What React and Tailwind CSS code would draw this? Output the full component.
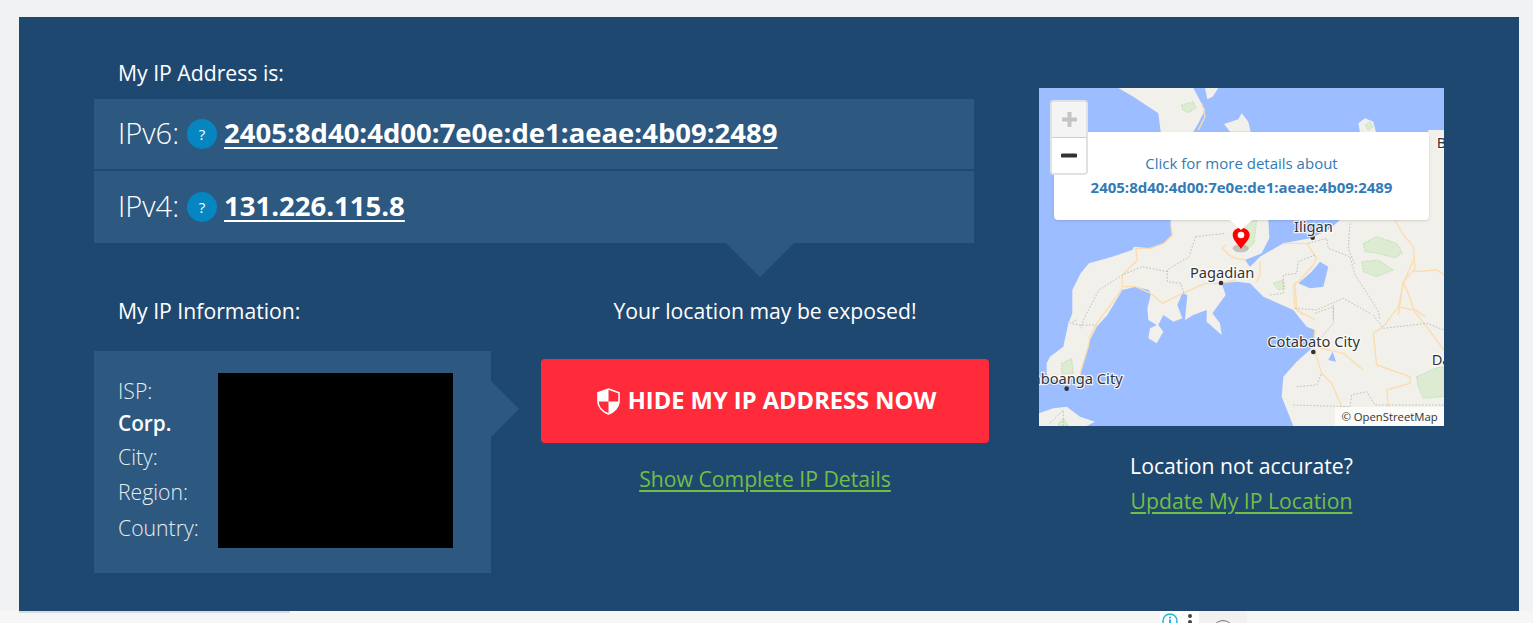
const path = (dx, dy, pts, close) =>
  "M" + pts.map(([x, y]) => `${x + dx},${y + dy}`).join(" L") + (close ? " Z" : "");
const c0 = (pts, close) => path(0, 510, pts, close); // lower half of the map
const c2 = (pts, close) => path(27, 405, pts, close); // middle left
const c3 = (pts, close) => path(630, 405, pts, close); // middle right

const LAND = "M1242,150 L1197,150 L1100,250 L1000,380 L930,420 L895,450 L840,475 L760,490 L690,530 L660,560 L645,540 L695,520 L718,475 L715,420 L715,300 L500,200 L490,155 L505,130 L525,90 L490,24 L265,24 L310,50 L385,100 L392,155 L420,300 L422,430 L427,465 L402,490 L357,505 L312,500 L307,510 L247,530 L177,550 L152,580 L127,630 L127,700 L115,730 L100,800 L60,830 L50,850 L50,880 L60,900 L110,900 L150,890 L165,830 L180,780 L200,740 L232,705 L277,630 L317,620 L357,630 L362,645 L352,685 L355,720 L380,735 L360,745 L355,775 L380,790 L400,755 L385,735 L400,705 L430,725 L457,715 L442,675 L457,640 L472,645 L465,720 L490,705 L530,690 L530,725 L575,765 L570,730 L547,700 L587,645 L575,610 L620,605 L660,610 L700,650 L790,690 L830,740 L855,750 L850,800 L800,845 L760,890 L755,950 L790,1038 L1242,1038 Z";
const ROADS = [
  "M515,70 L525,110 L505,150",
  c2([[395, 30], [400, 60], [375, 85], [335, 100], [290, 100], [295, 135], [250, 180], [250, 215], [290, 215], [335, 235], [370, 265], [430, 235], [500, 205], [545, 205], [590, 195]]),
  c2([[560, 90], [550, 100], [570, 120], [590, 130], [620, 135]]),
  "M150,880 L175,800 L180,770 L200,730 L245,670 L277,625",
  c3([[465, 15], [490, 60], [520, 95], [525, 160], [490, 200], [475, 300]]),
  c3([[490, 200], [510, 250], [520, 280], [555, 305]]),
  c3([[520, 170], [590, 165], [615, 180]]),
  c3([[60, 140], [60, 180], [50, 200]]),
  c3([[130, 85], [200, 85], [230, 130], [220, 150], [180, 195], [160, 210], [165, 280], [190, 300]]),
  c0([[855, 240], [850, 290], [875, 370], [905, 400], [935, 470]]),
  c0([[855, 290], [940, 310], [1000, 360]]),
  c0([[1030, 250], [1040, 345], [1140, 380], [1140, 400], [1070, 420], [1075, 470]]),
  c0([[1150, 30], [1120, 100], [1105, 170], [1150, 180], [1190, 230], [1242, 300]]),
  c0([[1105, 170], [1060, 230], [1030, 250]]),
  c0([[795, 100], [800, 180], [855, 210]]),
];
const BORDERS = [
  c2([[470, 65], [560, 55]]),
  c2([[470, 65], [450, 125], [385, 165], [385, 200], [425, 205], [435, 235]]),
  c2([[385, 170], [310, 155], [250, 180], [180, 225], [135, 310], [125, 340]]),
  "M140,720 L120,730 L150,735 L200,735",
  c3([[205, 85], [260, 70], [265, 100], [330, 125], [345, 180], [385, 240], [415, 290], [420, 315]]),
  c3([[225, 120], [175, 140], [170, 175], [130, 180], [130, 235], [90, 240]]),
  c3([[165, 280], [230, 285], [310, 250], [390, 295]]),
  c3([[280, 270], [280, 315]]),
  c3([[330, 25], [325, 100], [345, 150]]),
  c0([[800, 410], [860, 405], [875, 370]]),
  c0([[790, 465], [960, 470], [965, 435], [1010, 425], [1035, 465], [1242, 465]]),
  c0([[1030, 195], [1060, 235], [1190, 220], [1242, 240]]),
  c0([[855, 190], [910, 170], [910, 220], [850, 290]]),
  c0([[60, 520], [100, 480], [100, 528]]),
];
const GREENS = [
  "M455,75 L490,65 L498,85 L475,98 L458,90 Z",
  "M1005,135 L1020,125 L1030,140 L1015,150 Z",
  c3([[370, 85], [410, 65], [470, 85], [488, 115], [465, 128], [410, 115], [375, 110]], true),
  c3([[365, 140], [415, 135], [460, 165], [410, 185], [370, 170]], true),
  c3([[100, 205], [130, 195], [135, 220], [115, 225]], true),
  c0([[1160, 380], [1215, 355], [1242, 350], [1242, 440], [1180, 445], [1165, 410]], true),
  c0([[95, 340], [125, 325], [130, 370], [95, 372]], true),
  "M645,430 L680,420 L672,490 L650,510 L640,500 Z",
  c0([[85, 520], [100, 505], [115, 528], [85, 528]], true),
];
const LABELS = [
  ["Iligan", 792, 455, "start"],
  ["Pagadian", 480, 595, "start"],
  ["Cotabato City", 712, 802, "start"],
  ["Zamboanga City", 278, 912, "end"],
  ["B", 1220, 205, "start"],
  ["Da", 1205, 855, "start"],
];
const DOTS = [[848, 473], [573, 609], [850, 816], [110, 926]];

function MapArt() {
  return (
    <svg viewBox="27 24 1215 1014" width="405" height="338" className="block">
      <rect x="27" y="24" width="1215" height="1014" fill="#9cbdff" />
      <path d={LAND} fill="#f2f0eb" />
      <path d="M27,1000 L70,985 L110,980 L150,1010 L195,1025 L170,1038 L27,1038 Z" fill="#f2f0eb" />
      <path d="M525,24 L565,24 L548,50 L532,58 Z" fill="#f2f0eb" />
      <path d="M582,132 L625,118 L635,100 L655,125 L662,155 L600,155 Z" fill="#f2f0eb" />
      <path d="M985,130 L1005,115 L1030,125 L1038,157 L990,157 Z" fill="#f2f0eb" />
      {GREENS.map((d) => (
        <path key={d} d={d} fill="#dcebd2" stroke="#b4e0ac" strokeWidth="3" strokeDasharray="4 4" strokeLinejoin="round" />
      ))}
      <path d={c3([[240, 140], [265, 155], [250, 215], [210, 220], [175, 205], [215, 170]], true)} fill="#9cbdff" />
      <path d="M895,840 L908,815 L918,845 Z" fill="#9cbdff" />
      {ROADS.map((d) => (
        <path key={d} d={d} fill="none" stroke="#fbdcae" strokeWidth="4" strokeLinejoin="round" />
      ))}
      {BORDERS.map((d) => (
        <path key={d} d={d} fill="none" stroke="#c2c0bb" strokeWidth="3" strokeDasharray="5 5" />
      ))}
      {DOTS.map(([x, y]) => (
        <circle key={x} cx={x} cy={y} r="7" fill="#333" />
      ))}
      {LABELS.map(([t, x, y, a]) => (
        <text
          key={t}
          x={x}
          y={y}
          textAnchor={a}
          fontSize="44"
          fill="#333"
          stroke="#ffffff"
          strokeWidth="7"
          strokeOpacity="0.85"
          paintOrder="stroke"
          style={{ fontFamily: '"Noto Sans", sans-serif' }}
        >
          {t}
        </text>
      ))}
      <ellipse cx="632" cy="505" rx="24" ry="12" fill="#8a8f80" opacity="0.45" />
      <path d="M633,507 C620,488 608,478 608,465 C608,452 619,443 633,443 C647,443 659,452 659,465 C659,478 646,488 633,507 Z" fill="#ff0000" />
      <circle cx="633" cy="465" r="10" fill="#ffffff" />
    </svg>
  );
}

function Shield() {
  return (
    <svg viewBox="0 0 24 28" width="23" height="27" className="shrink-0">
      <path d="M12 1 L23 5 V13 C23 20 18 25 12 27 C6 25 1 20 1 13 V5 Z" fill="none" stroke="#fff" strokeWidth="1.6" />
      <path d="M12 1 V14 H1 V5 Z M12 14 H23 C22.5 20 18 25 12 27 Z" fill="#fff" />
    </svg>
  );
}

function Q() {
  return (
    <span className="ml-2 mr-[7px] inline-flex h-[30px] w-[30px] shrink-0 items-center justify-center rounded-full bg-[#0686c1] text-[15px] font-normal text-white">
      ?
    </span>
  );
}

function IpRow({ label, ip, h, children }) {
  return (
    <div className={`relative flex items-center bg-[#2d5880] pl-[24px] ${h}`}>
      <span className="mb-[2px] text-[29px] font-light text-white">{label}</span>
      <Q />
      <a className="mb-[2px] text-[27.5px] font-bold text-white underline underline-offset-[4px]">{ip}</a>
      {children}
    </div>
  );
}

export default function App() {
  return (
    <div
      className="flex h-[623px] w-full flex-col overflow-hidden bg-[#f1f2f4] pt-[17px] text-white"
      style={{ fontFamily: '"Open Sans", sans-serif' }}
    >
      <div className="ml-[19px] mr-[14px] flex h-[594px] shrink-0 bg-[#1f4871] pl-[75px]">
        <div className="w-[895px] shrink-0">
          <div className="mt-[42px] mb-[12px] pl-[24px] text-[21.2px] leading-[28px]">My IP Address is:</div>
          <div className="flex w-[880px] flex-col gap-[2px]">
            <IpRow label="IPv6:" ip="2405:8d40:4d00:7e0e:de1:aeae:4b09:2489" h="h-[70px]" />
            <IpRow label="IPv4:" ip="131.226.115.8" h="h-[72px]">
              <div className="absolute left-[632px] top-full h-[34px] w-[68px] bg-[#2d5880] [clip-path:polygon(0_0,100%_0,50%_100%)]" />
            </IpRow>
          </div>
          <div className="flex">
            <div className="w-[397px] shrink-0">
              <div className="mt-[54px] mb-[26px] pl-[24px] text-[21.2px] leading-[28px]">My IP Information:</div>
              <div className="relative flex h-[222px] bg-[#2d5880] pl-[24px] pt-[22px]">
                <div className="w-[100px] shrink-0 text-[21.2px] font-light leading-[28px] text-[#e8eef4]">
                  <div className="mt-[4px]">ISP:</div>
                  <div className="mt-[4px] text-[20.8px] font-semibold text-white">Corp.</div>
                  <div className="mt-[6px]">City:</div>
                  <div className="mt-[7px]">Region:</div>
                  <div className="mt-[8px]">Country:</div>
                </div>
                <div className="h-[175px] w-[235px] bg-black" />
                <div className="absolute left-full top-[30px] h-[56px] w-[28px] bg-[#2d5880] [clip-path:polygon(0_0,100%_50%,0_100%)]" />
              </div>
            </div>
            <div className="ml-[50px] w-[448px] shrink-0 text-center">
              <div className="mt-[54px] text-[21.2px] leading-[28px]">Your location may be exposed!</div>
              <button className="mt-[34px] flex h-[84px] w-full items-center justify-center gap-[8px] rounded-[4px] bg-[#ff2b3b] pl-[3px] text-[23.7px] font-bold text-white">
                <Shield />
                HIDE MY IP ADDRESS NOW
              </button>
              <a className="mt-[22px] block text-[21.2px] leading-[28px] text-[#71bf44] underline underline-offset-[3px]">
                Show Complete IP Details
              </a>
            </div>
          </div>
        </div>
        <div className="ml-[50px] w-[405px] shrink-0 pt-[71px] text-center">
          <div className="relative h-[338px] w-[405px] overflow-hidden">
            <MapArt />
            <div className="absolute left-[15px] top-[44px] flex h-[88px] w-[375px] flex-col items-center justify-center rounded-[4px] bg-white pb-[2px] text-[#337ab7] shadow-sm">
              <div className="text-[15px] leading-[24px]">Click for more details about</div>
              <div className="text-[15px] font-bold leading-[24px]">2405:8d40:4d00:7e0e:de1:aeae:4b09:2489</div>
              <div className="absolute left-[176px] top-full h-[10px] w-[22px] bg-white [clip-path:polygon(0_0,100%_0,50%_100%)]" />
            </div>
            <div className="absolute left-[11px] top-[12px] flex h-[75px] w-[38px] flex-col rounded-[4px] border-2 border-[#dfe1e3] bg-white">
              <div className="flex h-[36px] items-center justify-center rounded-t-[3px] border-b border-[#ccc] bg-[#f4f4f4]">
                <svg width="15" height="15" viewBox="0 0 15 15">
                  <path d="M7.5 1 V14 M1 7.5 H14" stroke="#c4c4c4" strokeWidth="4" strokeLinecap="round" />
                </svg>
              </div>
              <div className="flex flex-1 items-center justify-center">
                <svg width="16" height="5" viewBox="0 0 16 5">
                  <path d="M1.5 2.5 H14.5" stroke="#333" strokeWidth="4" strokeLinecap="round" />
                </svg>
              </div>
            </div>
            <div className="absolute bottom-0 right-0 w-[109px] whitespace-nowrap bg-white/70 text-center text-[11.3px] leading-[19px] text-[#333]">
              © OpenStreetMap
            </div>
          </div>
          <div className="mt-[26px] text-[21.2px] leading-[28px]">Location not accurate?</div>
          <a className="mt-[7px] block text-[21.2px] leading-[28px] text-[#71bf44] underline underline-offset-[3px]">
            Update My IP Location
          </a>
        </div>
      </div>
      <div className="relative flex h-[12px] shrink-0 items-start overflow-hidden bg-[#f6f6f6]">
        <div className="ml-[19px] h-[2px] w-[271px] bg-[#d7dce0]" />
        <div className="ml-[870px] flex h-[12px] w-[20px] justify-center bg-white pt-[2px]">
          <svg width="16" height="16" viewBox="0 0 16 16" className="shrink-0">
            <circle cx="8" cy="8" r="7" fill="none" stroke="#22b8d8" strokeWidth="1.5" />
            <circle cx="8" cy="4.5" r="1.1" fill="#22b8d8" />
            <rect x="7" y="6.5" width="2" height="6" fill="#22b8d8" />
          </svg>
        </div>
        <div className="flex h-[12px] w-[19px] flex-col items-center gap-[2px] bg-white pt-[3px]">
          <span className="h-[4px] w-[4px] shrink-0 rounded-full bg-[#444]" />
          <span className="h-[4px] w-[4px] shrink-0 rounded-full bg-[#444]" />
        </div>
        <div className="flex h-[12px] w-[48px] justify-center bg-[#f2f1ef] pt-[9px]">
          <span className="h-[22px] w-[22px] shrink-0 rounded-full border border-[#777]" />
        </div>
      </div>
    </div>
  );
}
